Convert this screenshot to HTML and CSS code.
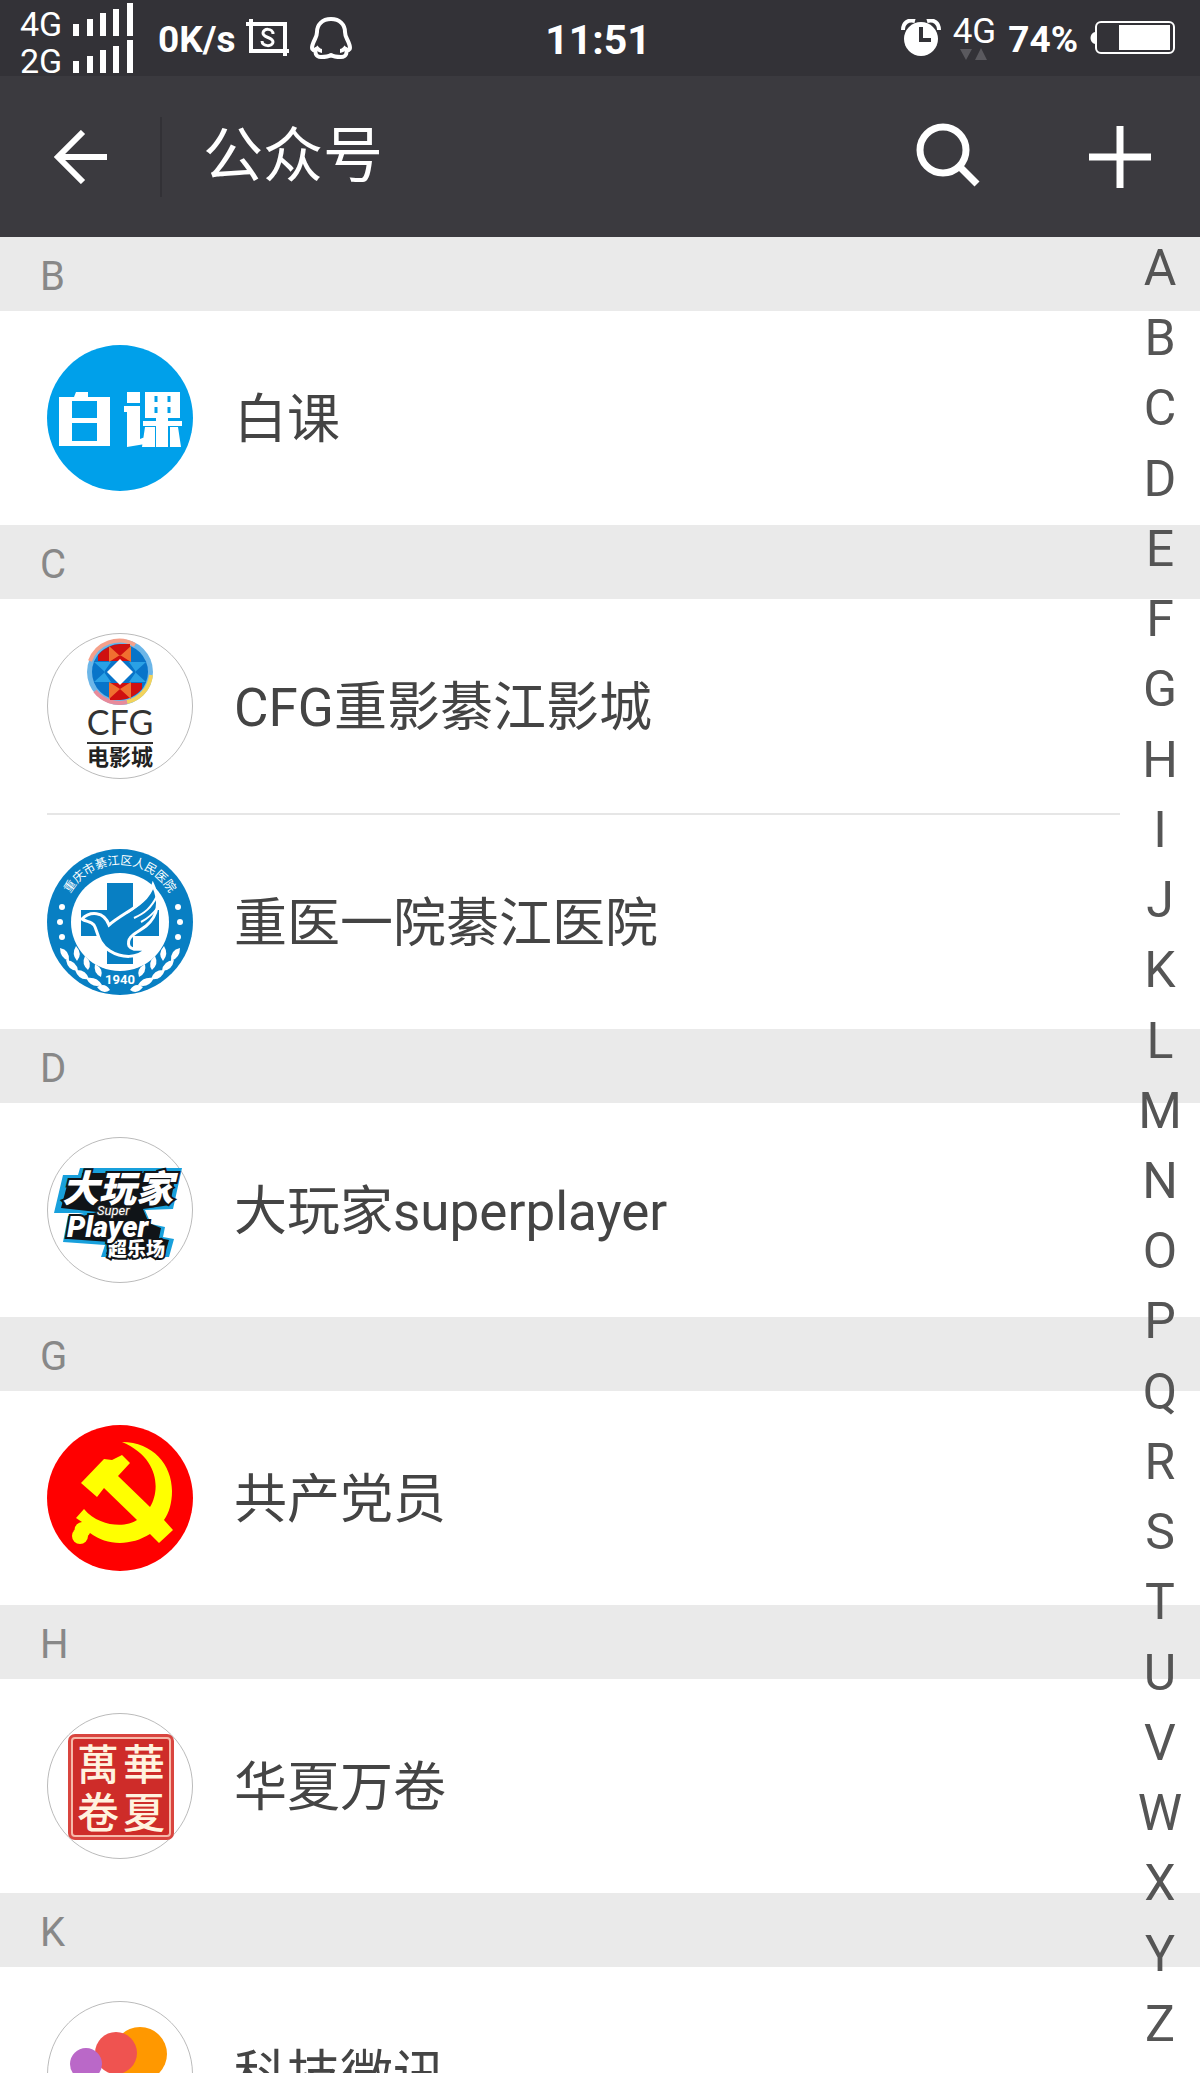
FILE: index.html
```html
<!DOCTYPE html>
<html lang="zh-CN">
<head>
<meta charset="utf-8">
<meta name="viewport" content="width=device-width, initial-scale=1">
<title>公众号</title>
<link rel="stylesheet" href="styles.css">
</head>
<body>
<div class="screen">
  <div class="status">
    <div class="status-left">
      <div class="networks">
        <div class="network"><span>4G</span><svg width="61" height="33" viewBox="0 0 61 33" fill="#fff"><path d="M0 21h6v12H0zM14 16h6v17h-6zM27 10h6v23h-6zM40 6h6v27h-6zM54 0h6v33h-6z"/></svg></div>
        <div class="network"><span>2G</span><svg width="61" height="33" viewBox="0 0 61 33" fill="#fff"><path d="M0 21h6v12H0zM14 16h6v17h-6zM27 10h6v23h-6zM40 6h6v27h-6zM54 0h6v33h-6z"/></svg></div>
      </div>
      <span class="status-text">0K/s</span>
      <div class="notices">
        <svg width="44" height="40" viewBox="0 0 44 40" fill="none" stroke="#fff"><path stroke-width="4" d="M0 6h39v32M5 1v32h38"/><path stroke-width="3" d="M27 16c0-6-10-6-10-1s10 4 10 9-11 5-11-1"/></svg>
        <svg width="42" height="44" viewBox="0 0 42 44" fill="none" stroke="#fff" stroke-width="4" stroke-linejoin="round"><path d="M21 3C12 3 7 9 7 16c0 3-1 5-2 7-2 4-3 6-3 9 0 2 2 3 4 1-1 3-1 8 5 8 4 0 7 0 10-2 3 2 6 2 10 2 6 0 6-5 5-8 2 2 4 1 4-1 0-3-1-5-3-9-1-2-2-4-2-7C35 9 30 3 21 3z"/><path d="M6 31c2 2 3 4 6 4M36 31c-2 2-3 4-6 4"/></svg>
      </div>
    </div>
    <time class="status-text">11:51</time>
    <div class="status-right">
      <svg width="40" height="38" viewBox="0 0 40 38"><circle cx="20" cy="20" r="17" fill="#fff"/><path d="M20 8v13h10" fill="none" stroke="#333237" stroke-width="4"/><path d="M2 11C2 4 7 0 14 2M26 2c7-2 12 2 12 9" fill="none" stroke="#fff" stroke-width="4"/></svg>
      <div class="data"><span>4G</span><svg width="28" height="12" viewBox="0 0 28 12" fill="#5a595e"><path d="M0 1h12L6 12zM15 12h12L21 0z"/></svg></div>
      <span class="status-text">74%</span>
      <svg width="86" height="34" viewBox="0 0 86 34"><path d="M5 11c-6 1-6 11 0 12z" fill="#fff"/><rect x="6" y="1" width="78" height="31" rx="5" fill="none" stroke="#fff" stroke-width="2"/><path d="M29 4h51v25H29z" fill="#fff"/></svg>
    </div>
  </div>
  <header class="bar">
    <button class="back" aria-label="返回"><svg width="54" height="54" viewBox="0 0 54 54" fill="none" stroke="#fff" stroke-width="6"><path d="M30 2L5 27l25 25M4 27h50"/></svg></button>
    <h1>公众号</h1>
    <button class="tool" aria-label="搜索"><svg width="64" height="68" viewBox="0 0 64 68" fill="none" stroke="#fff"><circle cx="27" cy="27" r="23" stroke-width="7"/><path stroke-width="7" d="M43 43l18 18"/></svg></button>
    <button class="tool" aria-label="添加"><svg width="62" height="62" viewBox="0 0 62 62" stroke="#fff" stroke-width="7"><path d="M0 31h62M31 0v62"/></svg></button>
  </header>
  <main class="list">
    <section id="B"><h2>B</h2>
      <ul>
        <li><a href="#B"><svg class="avatar" viewBox="0 0 146 146"><circle cx="73" cy="73" r="73" fill="#00a0ea"/><path fill="#fff" fill-rule="evenodd" d="M12 52h15l2-5h12v5h22v49H12zM25 56v17h25V56zM25 78v18h25V78z"/><path fill="#fff" d="M80 47h13v11H80zM77 61h16v33l5-2v7l-18 3V67h-3zM98 47h35v26H98zM96 76h39v5H96zM109 73h12v29h-12zM98 82h10v20H95zM123 82h8l3 20h-11z"/><path stroke="#00a0ea" stroke-width="3" d="M109 51v6M109 62v6M122 51v6M122 62v6"/></svg><span>白课</span></a></li>
      </ul>
    </section>
    <section id="C"><h2>C</h2>
      <ul>
        <li><a href="#C"><svg class="avatar" viewBox="0 0 146 146"><circle class="ring" cx="73" cy="73" r="72.500"/><circle cx="73" cy="39" r="33" fill="#6cb6e8"/><path d="M43 28A31 31 0 0 1 88 12" fill="none" stroke="#f5a08a" stroke-width="4"/><path d="M104 42A31 31 0 0 1 80 69" fill="none" stroke="#f3d35b" stroke-width="4"/><path d="M80 69A31 31 0 0 1 48 58" fill="none" stroke="#e88a9a" stroke-width="4"/><circle cx="73" cy="39" r="28" fill="#0874c9"/><path fill="#cf1010" d="M51 22q9-10 22-11h10v17H51zM95 56q-9 10-22 11H63V50h32z"/><path fill="#f07030" d="M62 13l11 10 11-10v16l-11-7-11 7zM62 66l11-10 11 10V49l-11 7-11-7z"/><path fill="#2aa1e5" d="M47 29l11 10-11 10h17l-7-10 7-10zM99 29L88 39l11 10H82l7-10-7-10z"/><path fill="#fff" d="M73 26l13 13-13 13-13-13z"/><text x="73" y="102" text-anchor="middle" class="lato" font-size="34" fill="#333">CFG</text><path stroke="#333" stroke-width="2" d="M40 110h66"/><text x="73" y="132" text-anchor="middle" font-size="22" font-weight="700" fill="#222">电影城</text></svg><span>CFG重影綦江影城</span></a></li>
        <li><a href="#C"><svg class="avatar" viewBox="0 0 146 146"><circle cx="73" cy="73" r="73" fill="#087fc3"/><circle cx="73" cy="73" r="49" fill="#fff"/><path fill="#087fc3" d="M60 34h26v27h26v26H86v28H60V87H34V61h26z"/><path d="M35 70c8-8 22-8 27 6 16-14 38-20 44-40 7 15 6 30-7 41-9 7-20 10-17 20 3 5 10 3 17 3-8 10-25 9-36 2C50 94 51 82 47 76c-3-4-8-3-12-6z" fill="#087fc3" stroke="#fff" stroke-width="3"/><path d="M106 36c-6 14-14 20-26 28M110 47c-6 12-12 17-23 22M112 57c-6 8-10 12-18 16" fill="none" stroke="#fff" stroke-width="2"/><g fill="#fff"><circle cx="15" cy="58" r="3"/><circle cx="13" cy="73" r="3"/><circle cx="15" cy="88" r="3"/><circle cx="131" cy="58" r="3"/><circle cx="133" cy="73" r="3"/><circle cx="131" cy="88" r="3"/></g><path id="arc" d="M17 62A57 57 0 0 1 129 62" fill="none"/><text font-size="12" fill="#fff"><textPath href="#arc" startOffset="50%" text-anchor="middle">重庆市綦江区人民医院</textPath></text><g id="leaf" fill="#fff"><path d="M13 99q10 2 9 13-9-3-9-13zM19 111q11 1 12 11-10 0-12-11zM28 121q11-1 14 9-10 2-14-9zM39 129q11-2 16 7-10 4-16-7zM29 97q7 8 1 15-6-7-1-15zM38 107q8 7 3 14-7-6-3-14zM48 115q9 5 6 13-8-4-6-13zM50 138q8-5 13 3-7 5-13-3z"/></g><use href="#leaf" transform="matrix(-1 0 0 1 146 0)"/><text x="73" y="135" text-anchor="middle" font-size="13" font-weight="700" class="latin" fill="#fff">1940</text></svg><span>重医一院綦江医院</span></a></li>
      </ul>
    </section>
    <section id="D"><h2>D</h2>
      <ul>
        <li><a href="#D"><svg class="avatar" viewBox="0 0 146 146"><circle class="ring" cx="73" cy="73" r="72.500"/><path fill="#18a0dc" d="M33 31h102l-9 41-28 1 6 14 14 3-2 10 11 2-5 18H54l4-12-42-3 5-26 16-3-30 0 9-38h15z"/><path fill="#101418" d="M35 36h94l-6 32-27 4 6 14 12 5-2 10 10 2-4 14H59l4-12-42-3 4-20 25-7-36-4 8-30h13z"/><g fill="#fff" stroke="#101418" stroke-width="4" paint-order="stroke" font-weight="900"><text x="15" y="65" font-size="37" font-style="italic">大玩家</text><text x="61" y="119" font-size="19">超乐场</text><text x="20" y="100" font-size="29" font-style="italic" class="latin">Player</text></g><text x="50" y="78" font-size="13" font-style="italic" class="latin" fill="#fff" stroke="#333" stroke-width="2" paint-order="stroke">Super</text></svg><span>大玩家superplayer</span></a></li>
      </ul>
    </section>
    <section id="G"><h2>G</h2>
      <ul>
        <li><a href="#G"><svg class="avatar" viewBox="0 0 146 146"><circle cx="73" cy="73" r="73" fill="#f00"/><g fill="#ff0"><path d="M75 17c31 0 50 23 50 49 0 12-3 22-8 29l9 10-14 13-9-9c-19 12-43 12-60-1a8 8 0 1 1-8-11l-6-4 8-9c15 18 42 19 53 11L57 63l-7 9-16-14 23-24 8 1 10-5 8 8-12 13 32 31c10-16 10-49-28-65z"/><circle cx="33" cy="111" r="8"/></g></svg><span>共产党员</span></a></li>
      </ul>
    </section>
    <section id="H"><h2>H</h2>
      <ul>
        <li><a href="#H"><svg class="avatar" viewBox="0 0 146 146"><circle class="ring" cx="73" cy="73" r="72.500"/><rect x="21" y="21" width="106" height="106" rx="7" fill="#d9453f"/><rect x="25" y="25" width="98" height="98" rx="3" fill="#ce2c29" stroke="#f6b9aa" stroke-width="2"/><g fill="#fff3df" class="traditional" font-size="42" font-weight="500"><text x="30" y="67">萬</text><text x="76" y="67">華</text><text x="30" y="115">卷</text><text x="76" y="115">夏</text></g></svg><span>华夏万卷</span></a></li>
      </ul>
    </section>
    <section id="K"><h2>K</h2>
      <ul>
        <li><a href="#K"><svg class="avatar" viewBox="0 0 146 146"><circle class="ring" cx="73" cy="73" r="72.500"/><circle cx="93" cy="53" r="27" fill="#ff9800"/><circle cx="69" cy="52" r="21" fill="#ef5350"/><circle cx="39" cy="63" r="16" fill="#ba68c8"/></svg><span>科技微讯</span></a></li>
      </ul>
    </section>
  </main>
  <nav class="index" aria-label="索引">
    <a href="#A">A</a><a href="#B">B</a><a href="#C">C</a><a href="#D">D</a><a href="#E">E</a><a href="#F">F</a><a href="#G">G</a><a href="#H">H</a><a href="#I">I</a><a href="#J">J</a><a href="#K">K</a><a href="#L">L</a><a href="#M">M</a><a href="#N">N</a><a href="#O">O</a><a href="#P">P</a><a href="#Q">Q</a><a href="#R">R</a><a href="#S">S</a><a href="#T">T</a><a href="#U">U</a><a href="#V">V</a><a href="#W">W</a><a href="#X">X</a><a href="#Y">Y</a><a href="#Z">Z</a>
  </nav>
</div>
</body>
</html>
```
FILE: styles.css
```css
* { box-sizing: border-box; }
body {
  margin: 0;
  background: #fff;
  color: #444;
  font-family: Roboto, "Noto Sans CJK SC", sans-serif;
}
h1, h2, ul { margin: 0; padding: 0; font-weight: 400; }
ul { list-style: none; }
a { color: inherit; text-decoration: none; }
button { display: grid; place-items: center; padding: 0; border: 0; background: none; }
svg { display: block; flex: none; }

.screen { position: relative; height: 100vh; overflow: hidden; }

.status {
  display: grid;
  grid-template-columns: 1fr auto 1fr;
  align-items: center;
  height: 76px;
  padding: 0 24px 0 20px;
  background: #333237;
  color: #fff;
}
.status-left, .status-right, .notices { display: flex; align-items: center; }
.status-left { gap: 24px; }
.status-left .status-text { margin-right: -14px; }
.notices { gap: 20px; }
.status-right { justify-content: flex-end; gap: 12px; }
.status-text { font-size: 37px; font-weight: 700; line-height: 40px; padding-top: 4px; }
time.status-text { font-size: 41px; }
.networks { display: grid; gap: 4px; }
.network { display: flex; align-items: baseline; gap: 12px; height: 33px; font-size: 34px; line-height: 33px; }
.network span { width: 41px; }
.data { display: grid; justify-items: center; font-size: 35px; line-height: 32px; }

.bar {
  display: flex;
  align-items: center;
  height: 161px;
  background: #3b3a3f;
  color: #fff;
}
.back { width: 162px; height: 80px; border-right: 2px solid #323136; }
.bar h1 { flex: 1; padding-left: 41px; font-size: 60px; line-height: 80px; }
.tool { width: 160px; height: 80px; }
.tool + .tool { margin-left: 12px; }

.list h2 {
  height: 74px;
  padding-left: 40px;
  background: #eaeaea;
  color: #888;
  font-size: 40px;
  line-height: 80px;
}
.list li a {
  display: flex;
  align-items: center;
  gap: 41px;
  height: 214px;
  padding-left: 47px;
  font-size: 53px;
  line-height: 72px;
}
.list li span { padding-top: 4px; }
.list li + li::before {
  content: "";
  display: block;
  height: 2px;
  margin: 0 80px 0 47px;
  background: #e6e6e6;
}
.avatar { width: 146px; height: 146px; }
.avatar text { font-family: "Noto Sans CJK SC", sans-serif; }
.avatar .latin { font-family: Roboto, sans-serif; }
.avatar .lato { font-family: Lato, sans-serif; }
.avatar .traditional text { font-family: "Noto Sans CJK TC", sans-serif; }
.ring { fill: #fff; stroke: #bbb; }

.index {
  position: absolute;
  top: 233px;
  right: 0;
  bottom: 14px;
  display: grid;
  grid-auto-rows: 1fr;
  width: 80px;
  color: #555;
  font-size: 50px;
  line-height: 70px;
  text-align: center;
}
```
